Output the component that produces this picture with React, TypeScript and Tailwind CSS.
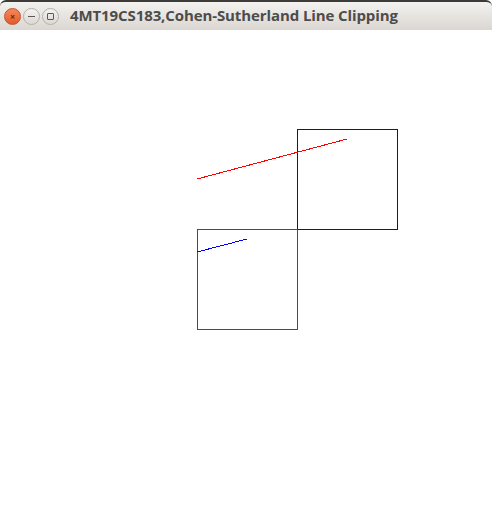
export default function App() {
  return (
    <div className="w-[492px] h-[525px] bg-white flex flex-col overflow-hidden">
      <div className="h-[30px] shrink-0 border-t-2 border-[#3c3b37] rounded-t-[6px] bg-gradient-to-b from-[#f3f2f0] to-[#dbd6d0] flex items-center">
        <div className="flex items-center gap-[2px] pl-[4px]">
          <div className="w-[17px] h-[17px] rounded-full bg-gradient-to-b from-[#f7875a] to-[#e35a2a] border border-[#c4532b] flex items-center justify-center text-[9px] leading-none text-[#6b2a12] font-bold">
            ×
          </div>
          <div className="w-[17px] h-[17px] rounded-full bg-gradient-to-b from-[#f4f3f1] to-[#dcd8d3] border border-[#b5b1ab] flex items-center justify-center">
            <div className="w-[7px] h-[1px] bg-[#5a5953]" />
          </div>
          <div className="w-[17px] h-[17px] rounded-full bg-gradient-to-b from-[#f4f3f1] to-[#dcd8d3] border border-[#b5b1ab] flex items-center justify-center">
            <div className="w-[7px] h-[7px] border border-[#5a5953] rounded-[1px]" />
          </div>
        </div>
        <div className="ml-[11px] font-['Open_Sans',sans-serif] font-bold text-[15px] text-[#4c4c4c] tracking-[-0.1px] mt-[-1px]">
          4MT19CS183,Cohen-Sutherland Line Clipping
        </div>
      </div>
      <svg width="492" height="495" className="block" shapeRendering="crispEdges">
        <rect x="297.5" y="99.5" width="100" height="100" fill="none" stroke="#0000ff" strokeWidth="1" />
        <rect x="197.5" y="199.5" width="100" height="100" fill="none" stroke="#ff0000" strokeWidth="1" />
        <line x1="197" y1="149" x2="347" y2="109" stroke="#ff0000" strokeWidth="1" />
        <line x1="197" y1="222" x2="247" y2="209" stroke="#0000ff" strokeWidth="1" />
      </svg>
    </div>
  )
}
